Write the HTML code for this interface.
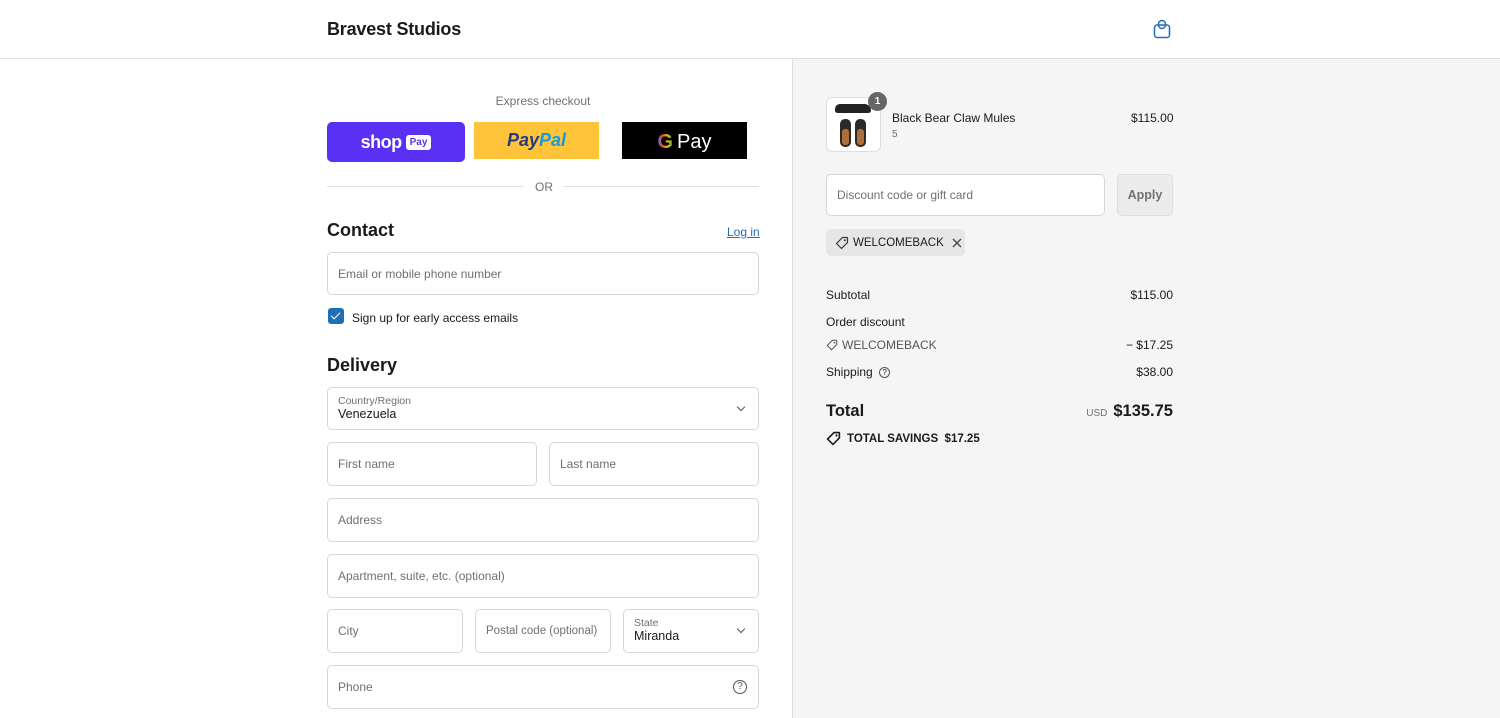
<!DOCTYPE html>
<html><head><meta charset="utf-8"><style>
*{box-sizing:border-box;margin:0;padding:0}
body{width:1500px;height:718px;overflow:hidden;font-family:"Liberation Sans",sans-serif;color:#1a1a1a;background:#fff;position:relative;font-size:12px}
.a{position:absolute}
.hdr{left:0;top:0;width:1500px;height:59px;border-bottom:1px solid #dedede;background:#fff}
.side{left:792px;top:59px;width:708px;height:659px;background:#f5f5f5;border-left:1px solid #dedede}
.inp{position:absolute;border:1px solid #d6d6d6;border-radius:5px;background:#fff;height:44px;padding-left:10px;display:flex;align-items:center;color:#707070;font-size:12px}
.lbl{font-size:10.5px;color:#707070}
.val{font-size:12.5px;color:#1a1a1a}
.chev{position:absolute;right:14px;top:16px;width:6px;height:6px;border-right:1.3px solid #555;border-bottom:1.3px solid #555;transform:rotate(45deg)}
.row{position:absolute;left:826px;width:347px;display:flex;justify-content:space-between;font-size:12px}
</style></head><body>
<div class="a hdr">
 <div class="a" style="left:327px;top:19px;font-size:18px;font-weight:bold;letter-spacing:-0.2px">Bravest Studios</div>
 <svg class="a" style="left:1153px;top:19px" width="18" height="20" viewBox="0 0 18 20"><rect x="1.5" y="6" width="15" height="12.5" rx="2.5" fill="none" stroke="#1f6fb4" stroke-width="1.5"/><rect x="5.5" y="1.5" width="7" height="8" rx="3.5" fill="none" stroke="#1f6fb4" stroke-width="1.5"/></svg>
</div>
<div class="a side"></div>

<div class="a" style="left:327px;top:94px;width:432px;text-align:center;color:#707070;font-size:12px">Express checkout</div>
<div class="a" style="left:327px;top:122px;width:138px;height:40px;background:#5a31f4;border-radius:5px;color:#fff;display:flex;align-items:center;justify-content:center;gap:4px"><span style="font-size:18px;font-weight:bold;letter-spacing:-0.5px">shop</span><span style="background:#fff;color:#5a31f4;font-size:10px;font-weight:bold;padding:2px 4px;border-radius:3px">Pay</span></div>
<div class="a" style="left:474px;top:122px;width:125px;height:37px;background:#ffc439;display:flex;align-items:center;justify-content:center;font-size:18px;font-weight:bold;font-style:italic"><span style="color:#253b80">Pay</span><span style="color:#179bd7">Pal</span></div>
<div class="a" style="left:622px;top:122px;width:125px;height:37px;background:#000;display:flex;align-items:center;justify-content:center;color:#fff;font-size:20px;gap:4px;padding-top:3px"><span style="font-weight:bold;background:linear-gradient(90deg,#4285f4,#ea4335,#fbbc05,#34a853);-webkit-background-clip:text;color:transparent">G</span>Pay</div>
<div class="a" style="left:327px;top:186px;width:196px;border-top:1px solid #dedede"></div>
<div class="a" style="left:535px;top:180px;color:#707070;font-size:12px">OR</div>
<div class="a" style="left:564px;top:186px;width:195px;border-top:1px solid #dedede"></div>

<div class="a" style="left:327px;top:220px;font-size:18px;font-weight:bold">Contact</div>
<div class="a" style="left:727px;top:225px;color:#1f6fb4;text-decoration:underline;font-size:12px">Log in</div>
<div class="inp" style="left:327px;top:252px;width:432px;height:43px">Email or mobile phone number</div>
<div class="a" style="left:328px;top:308px;width:16px;height:16px;background:#1f6fb4;border-radius:3px"><div style="position:absolute;left:5px;top:2px;width:5px;height:9px;border-right:1.5px solid #fff;border-bottom:1.5px solid #fff;transform:rotate(45deg)"></div></div>
<div class="a" style="left:352px;top:311px;font-size:12px">Sign up for early access emails</div>

<div class="a" style="left:327px;top:355px;font-size:18px;font-weight:bold">Delivery</div>
<div class="inp" style="left:327px;top:387px;width:432px;height:43px;display:block;padding-top:7px"><div class="lbl">Country/Region</div><div class="val">Venezuela</div><div class="chev"></div></div>
<div class="inp" style="left:327px;top:442px;width:210px">First name</div>
<div class="inp" style="left:549px;top:442px;width:210px">Last name</div>
<div class="inp" style="left:327px;top:498px;width:432px">Address</div>
<div class="inp" style="left:327px;top:554px;width:432px">Apartment, suite, etc. (optional)</div>
<div class="inp" style="left:327px;top:609px;width:136px">City</div>
<div class="inp" style="left:475px;top:609px;width:136px;font-size:11.5px">Postal code (optional)</div>
<div class="inp" style="left:623px;top:609px;width:136px;display:block;padding-top:7px"><div class="lbl">State</div><div class="val">Miranda</div><div class="chev"></div></div>
<div class="inp" style="left:327px;top:665px;width:432px">Phone<span style="position:absolute;right:11px;top:14px;width:14px;height:14px;border:1.3px solid #555;border-radius:50%;font-size:10px;color:#555;text-align:center;line-height:12px">?</span></div>

<div class="a" style="left:826px;top:97px;width:55px;height:55px;border:1px solid #dedede;border-radius:6px;background:#fff;overflow:hidden">
 <div class="a" style="left:8px;top:6px;width:36px;height:9px;background:#222;border-radius:6px 8px 3px 3px"></div>
 <div class="a" style="left:13px;top:21px;width:11px;height:28px;background:#2a2a2a;border-radius:5px"></div>
 <div class="a" style="left:28px;top:21px;width:11px;height:28px;background:#2a2a2a;border-radius:5px"></div>
 <div class="a" style="left:15px;top:31px;width:7px;height:16px;background:#b06d3c;border-radius:3px"></div>
 <div class="a" style="left:30px;top:31px;width:7px;height:16px;background:#b06d3c;border-radius:3px"></div>
</div>
<div class="a" style="left:868px;top:92px;width:19px;height:19px;border-radius:50%;background:#666;color:#fff;font-size:10px;font-weight:bold;text-align:center;line-height:19px">1</div>
<div class="a" style="left:892px;top:111px;font-size:12px">Black Bear Claw Mules</div>
<div class="a" style="left:892px;top:129px;font-size:10px;color:#707070">5</div>
<div class="a" style="left:1131px;top:111px;font-size:12px">$115.00</div>

<div class="inp" style="left:826px;top:174px;width:279px;height:42px">Discount code or gift card</div>
<div class="a" style="left:1117px;top:174px;width:56px;height:42px;border:1px solid #dedede;border-radius:5px;background:#ececec;color:#707070;font-weight:bold;font-size:12.5px;display:flex;align-items:center;justify-content:center">Apply</div>
<div class="a" style="left:826px;top:229px;width:139px;height:27px;background:#e6e6e6;border-radius:5px;display:flex;align-items:center;padding-left:9px;gap:4px;font-size:11.5px">
 <svg width="14" height="14" viewBox="0 0 14 14" style="flex:none"><path d="M7.5 1.5h4.5a.5.5 0 0 1 .5.5v4.5L6.5 12.5 1.5 7.5z" fill="none" stroke="#333" stroke-width="1.2" stroke-linejoin="round"/><circle cx="9.8" cy="4.2" r="1" fill="#333"/></svg><span>WELCOMEBACK</span>
 <svg width="10" height="10" viewBox="0 0 10 10" style="flex:none;margin-left:4px"><path d="M1 1L9 9M9 1L1 9" stroke="#444" stroke-width="1.3"/></svg></div>

<div class="row" style="top:288px"><span>Subtotal</span><span>$115.00</span></div>
<div class="row" style="top:315px"><span>Order discount</span></div>
<div class="row" style="top:338px;color:#555"><span style="display:flex;gap:4px;align-items:center"><svg width="12" height="12" viewBox="0 0 14 14"><path d="M7.5 1.5h4.5a.5.5 0 0 1 .5.5v4.5L6.5 12.5 1.5 7.5z" fill="none" stroke="#555" stroke-width="1.2"/><circle cx="9.8" cy="4.2" r="1" fill="#555"/></svg>WELCOMEBACK</span><span style="color:#1a1a1a">− $17.25</span></div>
<div class="row" style="top:365px"><span>Shipping <span style="display:inline-block;width:11px;height:11px;border:1px solid #555;border-radius:50%;font-size:8px;text-align:center;line-height:10px;margin-left:3px;vertical-align:1px">?</span></span><span>$38.00</span></div>
<div class="row" style="top:402px;align-items:baseline"><span style="font-size:16.5px;font-weight:bold">Total</span><span><span style="font-size:10px;color:#707070;margin-right:6px">USD</span><span style="font-size:16.5px;font-weight:bold">$135.75</span></span></div>
<div class="a" style="left:826px;top:431px;font-size:11.5px;font-weight:bold;display:flex;gap:6px;align-items:center"><svg width="15" height="15" viewBox="0 0 14 14"><path d="M7.5 1.5h4.5a.5.5 0 0 1 .5.5v4.5L6.5 12.5 1.5 7.5z" fill="none" stroke="#1a1a1a" stroke-width="1.5"/><circle cx="9.8" cy="4.2" r="1" fill="#1a1a1a"/></svg>TOTAL SAVINGS&nbsp;&nbsp;$17.25</div>
</body></html>
